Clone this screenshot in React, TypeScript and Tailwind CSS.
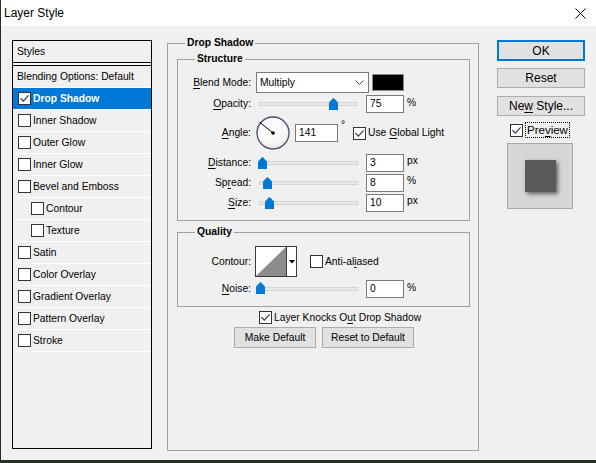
import React from "react";

const Box = ({ checked }: { checked?: boolean }) => (
  <span className="flex h-[13px] w-[13px] shrink-0 items-center justify-center border border-[#333333] bg-white">
    {checked && (
      <svg width="11" height="11" viewBox="0 0 11 11">
        <path d="M1.5 5.2 L4.3 8.2 L9.6 2.4" fill="none" stroke="#3a3a3a" strokeWidth="1.2" />
      </svg>
    )}
  </span>
);

const U = ({ children }: { children: React.ReactNode }) => (
  <span className="underline decoration-1 underline-offset-[2px]">{children}</span>
);

const Thumb = ({ cls }: { cls: string }) => (
  <svg className={cls} width="9" height="12" viewBox="0 0 9 12">
    <path d="M0 4.5 L3.8 0.6 Q4.5 0 5.2 0.6 L9 4.5 L9 12 L0 12 Z" fill="#0078d7" />
  </svg>
);

const Slider = ({ thumb }: { thumb: string }) => (
  <div className="relative ml-[3px] flex h-[20px] w-[106px] shrink-0 items-center">
    <div className="ml-[4px] h-[4px] w-[99px] border border-[#d4d4d4] bg-[#e8e8e8]" />
    <Thumb cls={thumb} />
  </div>
);

const Field = ({ value, w = "w-[38px]", ml = "ml-[5px]" }: { value: string; w?: string; ml?: string }) => (
  <div className={`${ml} ${w} flex h-[18px] shrink-0 items-center border border-[#7a7a7a] bg-white pl-[3px]`}>
    {value}
  </div>
);

const Label = ({ children }: { children: React.ReactNode }) => (
  <div className="w-[74px] shrink-0 pr-[1px] text-right">{children}</div>
);

const Group = ({ title, cls, children }: { title: string; cls: string; children: React.ReactNode }) => (
  <div className={`relative border border-[#a0a0a0] ${cls}`}>
    <div className="absolute -top-[8px] left-[17px] bg-[#f0f0f0] px-[2px] text-[10.3px] font-bold leading-[14px]">
      {title}
    </div>
    {children}
  </div>
);

const styleRows: { name: string; checked?: boolean; sub?: boolean; sel?: boolean }[] = [
  { name: "Drop Shadow", checked: true, sel: true },
  { name: "Inner Shadow" },
  { name: "Outer Glow" },
  { name: "Inner Glow" },
  { name: "Bevel and Emboss" },
  { name: "Contour", sub: true },
  { name: "Texture", sub: true },
  { name: "Satin" },
  { name: "Color Overlay" },
  { name: "Gradient Overlay" },
  { name: "Pattern Overlay" },
  { name: "Stroke" },
];

export default function App() {
  return (
    <div className="h-[463px] w-[596px] overflow-hidden bg-[#26301f] font-['Liberation_Sans',Arial,sans-serif] text-[10.3px] text-black">
      <div className="ml-px flex h-[460px] w-[595px] flex-col bg-[#f0f0f0]">
        {/* title bar */}
        <div className="flex h-[26px] shrink-0 items-center justify-between bg-white pl-[3px] pr-[10px]">
          <span className="text-[12px]">Layer Style</span>
          <svg width="11" height="11" viewBox="0 0 11 11">
            <path d="M0.5 0.5 L10.5 10.5 M10.5 0.5 L0.5 10.5" stroke="#000" strokeWidth="1" />
          </svg>
        </div>

        <div className="flex items-start">
          {/* left styles list */}
          <div className="ml-[11px] mt-[14px] flex h-[409px] w-[140px] shrink-0 flex-col border border-black">
            <div className="flex h-[21px] items-center pl-[4px]">Styles</div>
            <div className="h-[4px] border-y border-black bg-[#fafafa]" />
            <div className="flex h-[22px] items-center border-b border-white pl-[4px]">Blending Options: Default</div>
            {styleRows.map((r) => (
              <div
                key={r.name}
                className={`flex h-[22px] items-center border-b border-white ${r.sub ? "pl-[18px]" : "pl-[5px]"} ${
                  r.sel ? "bg-[#0078d7] font-bold text-white" : ""
                }`}
              >
                <Box checked={r.checked} />
                <span className="ml-[2px]">{r.name}</span>
              </div>
            ))}
          </div>

          {/* middle: Drop Shadow */}
          <Group title="Drop Shadow" cls="ml-[15px] mt-[17px] h-[408px] w-[312px] shrink-0">
            <Group title="Structure" cls="ml-[9px] mt-[15px] h-[162px] w-[293px]">
              <div className="flex flex-col">
                {/* Blend mode */}
                <div className="mt-[12px] flex h-[21px] items-center">
                  <Label>
                    <U>B</U>lend Mode:
                  </Label>
                  <div className="ml-[4px] flex h-[21px] w-[113px] items-center justify-between border border-[#7a7a7a] bg-white pl-[3px] pr-[4px]">
                    <span>Multiply</span>
                    <svg width="9" height="6" viewBox="0 0 9 6">
                      <path d="M0.5 0.5 L4.5 4.5 L8.5 0.5" fill="none" stroke="#444" strokeWidth="1" />
                    </svg>
                  </div>
                  <div className="ml-[3px] h-[17px] w-[32px] border border-[#8a8a8a] bg-black" />
                </div>
                {/* Opacity */}
                <div className="mt-[1px] flex h-[20px] items-center">
                  <Label>
                    <U>O</U>pacity:
                  </Label>
                  <Slider thumb="absolute top-[4px] left-[74px]" />
                  <Field value="75" />
                  <span className="ml-[3px] self-start pt-[1px]">%</span>
                </div>
                {/* Angle */}
                <div className="mt-[1px] flex h-[36px] items-center">
                  <Label>
                    <U>A</U>ngle:
                  </Label>
                  <svg className="ml-[4px] shrink-0" width="34" height="34" viewBox="0 0 34 34">
                    <defs>
                      <radialGradient id="dg" cx="0.45" cy="0.35" r="0.7">
                        <stop offset="0" stopColor="#ffffff" />
                        <stop offset="0.7" stopColor="#f6f6f6" />
                        <stop offset="1" stopColor="#d8d8d8" />
                      </radialGradient>
                    </defs>
                    <circle cx="17" cy="17" r="16" fill="url(#dg)" stroke="#42506e" strokeWidth="1.3" />
                    <line x1="17" y1="17" x2="3.6" y2="6.2" stroke="#000" strokeWidth="1" />
                    <circle cx="17" cy="17" r="1.8" fill="#000" />
                  </svg>
                  <Field value="141" w="w-[43px]" />
                  <span className="ml-[3px] w-[12px] self-start pt-[5px] leading-[10px]">°</span>
                  <Box checked />
                  <span className="ml-[2px]">
                    Use <U>G</U>lobal Light
                  </span>
                </div>
                {/* Distance */}
                <div className="mt-[2px] flex h-[20px] items-center">
                  <Label>
                    <U>D</U>istance:
                  </Label>
                  <Slider thumb="absolute top-[4px] left-[3px]" />
                  <Field value="3" />
                  <span className="ml-[3px] self-start">px</span>
                </div>
                {/* Spread */}
                <div className="flex h-[20px] items-center">
                  <Label>
                    Sp<U>r</U>ead:
                  </Label>
                  <Slider thumb="absolute top-[4px] left-[8px]" />
                  <Field value="8" />
                  <span className="ml-[3px] self-start">%</span>
                </div>
                {/* Size */}
                <div className="flex h-[20px] items-center">
                  <Label>
                    <U>S</U>ize:
                  </Label>
                  <Slider thumb="absolute top-[4px] left-[10px]" />
                  <Field value="10" />
                  <span className="ml-[3px] self-start">px</span>
                </div>
              </div>
            </Group>

            <Group title="Quality" cls="ml-[9px] mt-[11px] h-[75px] w-[293px]">
              <div className="flex flex-col">
                <div className="mt-[13px] flex h-[31px] items-center">
                  <Label>Contour:</Label>
                  <div className="ml-[3px] flex h-[31px] w-[42px] border border-[#3a3a3a] bg-white">
                    <svg width="30" height="29" viewBox="0 0 30 29">
                      <path d="M0 29 L30 0 L30 29 Z" fill="#8c8c8c" />
                    </svg>
                    <div className="flex flex-1 items-center justify-center border-l border-[#3a3a3a]">
                      <svg width="6" height="4" viewBox="0 0 6 4">
                        <path d="M0 0 L6 0 L3 3.5 Z" fill="#000" />
                      </svg>
                    </div>
                  </div>
                  <span className="ml-[13px]">
                    <Box />
                  </span>
                  <span className="ml-[2px]">
                    Anti-al<U>i</U>ased
                  </span>
                </div>
                <div className="mt-[3px] flex h-[18px] items-center">
                  <Label>
                    <U>N</U>oise:
                  </Label>
                  <Slider thumb="absolute top-[3px] left-[1px]" />
                  <Field value="0" />
                  <span className="ml-[3px] self-start">%</span>
                </div>
              </div>
            </Group>

            <div className="mt-[4px] flex h-[13px] items-center pl-[91px]">
              <Box checked />
              <span className="ml-[2px]">
                Layer Knocks O<U>u</U>t Drop Shadow
              </span>
            </div>
            <div className="mt-[3px] flex justify-center gap-[6px] pl-[2px]">
              <div className="flex h-[21px] w-[82px] items-center justify-center border border-[#adadad] bg-[#e1e1e1]">
                Make Default
              </div>
              <div className="flex h-[21px] w-[92px] items-center justify-center border border-[#adadad] bg-[#e1e1e1]">
                Reset to Default
              </div>
            </div>
          </Group>

          {/* right column */}
          <div className="ml-[18px] mt-[14px] flex w-[88px] shrink-0 flex-col text-[12px]">
            <div className="flex h-[21px] items-center justify-center border-2 border-[#0078d7] bg-[#e1e1e1]">OK</div>
            <div className="mt-[7px] flex h-[20px] items-center justify-center border border-[#adadad] bg-[#e1e1e1]">
              Reset
            </div>
            <div className="mt-[8px] flex h-[20px] items-center justify-center border border-[#adadad] bg-[#e1e1e1]">
              <span>
                Ne<U>w</U> Style...
              </span>
            </div>
            <div className="mt-[6px] flex h-[16px] items-center pl-[13px]">
              <Box checked />
              <span className="ml-[2px] border border-dotted border-black px-[1px] text-[11.5px] leading-[14px]">
                Pre<U>v</U>iew
              </span>
            </div>
            <div className="ml-[10px] mt-[5px] flex h-[66px] w-[66px] items-center justify-center border border-[#a8a8a8] bg-[#d6d6d6]">
              <div className="h-[32px] w-[31px] bg-[#595959] shadow-[2px_2px_4px_rgba(0,0,0,0.55)]" />
            </div>
          </div>
        </div>
      </div>
    </div>
  );
}
